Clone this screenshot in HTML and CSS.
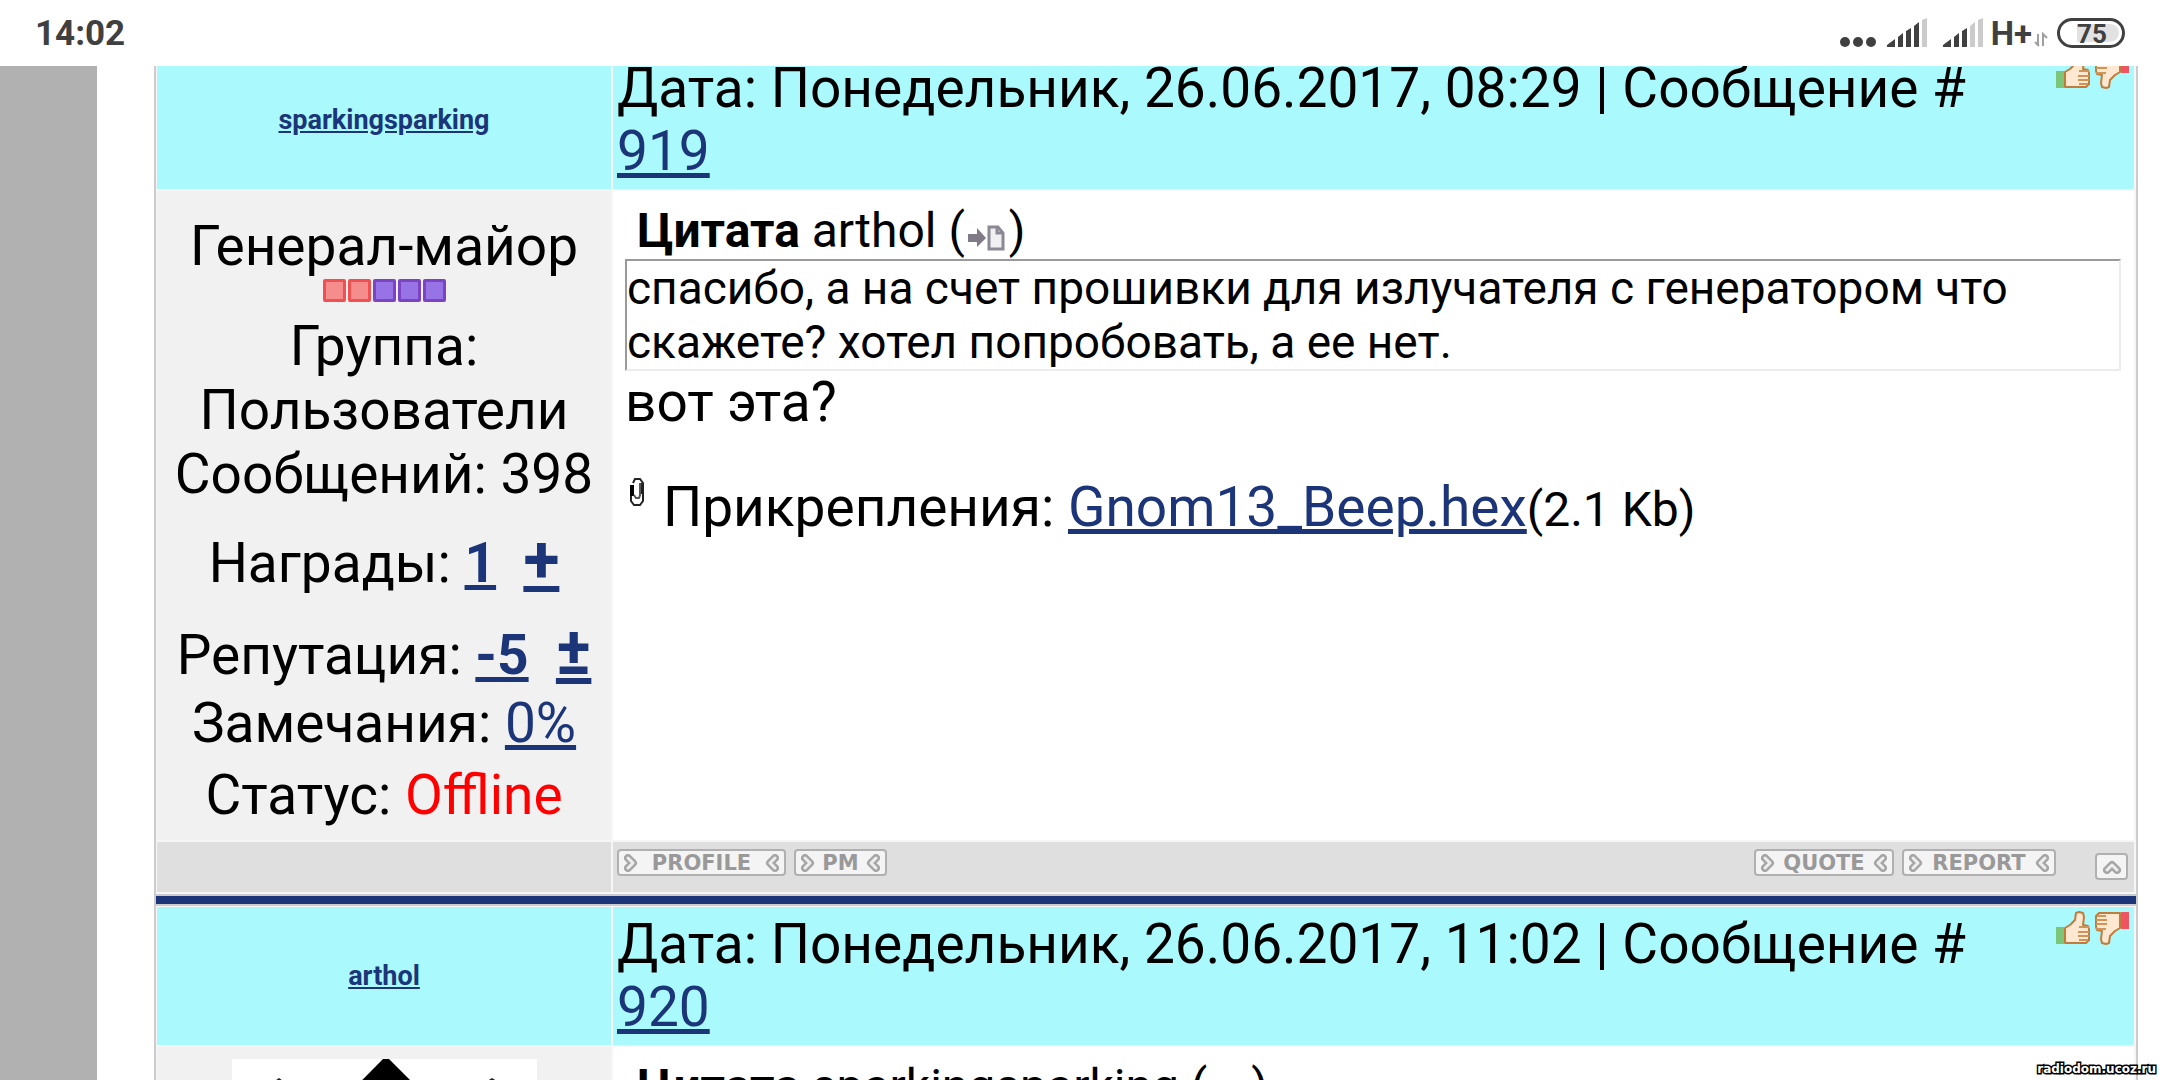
FILE: index.html
```html
<!DOCTYPE html>
<html lang="ru">
<head>
  <meta charset="UTF-8"/>
  <meta name="viewport" content="width=device-width, initial-scale=1.0"/>
  <title>Форум</title>
  <link rel="stylesheet" href="styles.css">
</head>
<body>
<!-- shared shapes -->
<svg class="defs" aria-hidden="true">
  <symbol id="chevron" viewBox="0 0 14 18">
    <path d="M4 4 L9 9 L4 14" fill="none" stroke="#a6a6a6" stroke-width="8" stroke-linecap="round" stroke-linejoin="round"/>
    <path d="M4 4 L9 9 L4 14" fill="none" stroke="#eeeeee" stroke-width="3" stroke-linecap="round" stroke-linejoin="round"/>
  </symbol>
  <symbol id="thumb" viewBox="0 0 34 34">
    <path d="M9 17 L14 14 L19 9 L20 2 L23 1 L27 2 L28 6 L27 14 L32 15 L33 18 V29 L30 32 H9 Z" fill="#ffe8d2" stroke="#bf7c3a" stroke-width="2" stroke-linejoin="round"/>
    <path d="M23 16 H33 M22 21 H33 M22 25 H33 M23 29 H32" stroke="#cf9558" stroke-width="2"/>
  </symbol>
  <symbol id="to-post" viewBox="0 0 38 26">
    <path d="M1 9 H10 V3 L19 13 L10 22 V17 H1 Z" fill="#7f7a86"/>
    <path d="M22 2 H31 L36 8 V24 H22 Z" fill="#f0f0f2" stroke="#8c8894" stroke-width="3"/>
    <path d="M30 2 V8 H36" fill="none" stroke="#8c8894" stroke-width="3"/>
  </symbol>
</svg>

<header class="status-bar">
  <span class="clock">14:02</span>
  <svg class="dots" width="36" height="30" viewBox="0 0 36 30">
    <g fill="#404040"><circle cx="5" cy="24" r="5"/><circle cx="18" cy="24" r="5"/><circle cx="31" cy="24" r="5"/></g>
  </svg>
  <svg class="signal" width="40" height="30" viewBox="0 0 40 30">
    <path d="M0 29 V27 L8 21 V29 Z M11 29 V19 L16 15 V29 Z M19 29 V13 L24 10 V29 Z M27 29 V8 L32 4 V29 Z" fill="#404040"/>
    <path d="M35 29 V2 L40 0 V29 Z" fill="#cbcbcb"/>
  </svg>
  <svg class="signal" width="40" height="30" viewBox="0 0 40 30">
    <path d="M0 29 V27 L8 21 V29 Z M11 29 V19 L16 15 V29 Z M19 29 V13 L24 10 V29 Z" fill="#404040"/>
    <path d="M27 29 V8 L32 4 V29 Z M35 29 V2 L40 0 V29 Z" fill="#cbcbcb"/>
  </svg>
  <span class="network">H+</span>
  <svg class="traffic" width="14" height="30" viewBox="0 0 14 30">
    <path d="M4 16 V28 M1 24 L5 28 M9 28 V16 L13 20" fill="none" stroke="#a0a0a0" stroke-width="2"/>
  </svg>
  <span class="battery"><span class="charge">75</span></span>
</header>

<div class="viewport">
  <aside class="gutter"></aside>
  <main class="forum">
    <!-- post 919 -->
    <article class="post">
      <div class="cell name"><a href="#">sparkingsparking</a></div>
      <div class="cell top">
        <div class="date">Дата: Понедельник, 26.06.2017, 08:29 | Сообщение # <a href="#">919</a></div>
        <div class="votes">
          <button aria-label="+"><svg width="34" height="34"><rect x="0" y="16" width="8" height="17" fill="#7cc67a"/><use href="#thumb"/></svg></button>
          <button aria-label="-"><svg width="34" height="34" viewBox="0 0 34 34"><g transform="rotate(180 17 17)"><rect x="0" y="16" width="8" height="17" fill="#ee5560"/><use href="#thumb"/></g></svg></button>
        </div>
      </div>

      <div class="cell user">
        <div class="line">Генерал-майор</div>
        <div class="rank"><i class="red"></i><i class="red"></i><i></i><i></i><i></i></div>
        <div class="line group">Группа: Пользователи</div>
        <div class="line">Сообщений: 398</div>
        <div class="line awards">Награды: <a href="#"><b>1</b></a>&nbsp; <a href="#" class="plus">+</a></div>
        <div class="line reputation">Репутация: <a href="#"><b>-5</b></a>&nbsp; <a href="#" class="plus">±</a></div>
        <div class="line warnings">Замечания: <a href="#">0%</a></div>
        <div class="line state">Статус: <span class="offline">Offline</span></div>
      </div>
      <div class="cell message">
        <div class="quote-title"><b>Цитата</b> arthol (<a href="#" aria-label="arthol"><svg class="to-post" width="38" height="26"><use href="#to-post"/></svg></a>)</div>
        <blockquote>спасибо, а на счет прошивки для излучателя с генератором что скажете? хотел попробовать, а ее нет.</blockquote>
        <p>вот эта?</p>
        <div class="attach">
          <svg class="clip" width="16" height="30" viewBox="0 0 16 30">
            <path d="M4 6 L6 2 H11 L14 6 V24 L11 28 H5 L2 24 V8" fill="#fff" stroke="#222" stroke-width="2"/>
            <path d="M3 8 V19" stroke="#000" stroke-width="4"/>
            <path d="M13 6 V17" stroke="#222" stroke-width="3"/>
            <path d="M5 18 L7 21 H10 L11 18 V6" fill="none" stroke="#555" stroke-width="2"/>
          </svg>
          <span>Прикрепления: <a href="#">Gnom13_Beep.hex</a><small>(2.1 Kb)</small></span>
        </div>
      </div>

      <div class="cell foot"></div>
      <div class="cell foot tools">
        <button class="tool profile"><svg width="14" height="18"><use href="#chevron"/></svg>PROFILE<svg class="flip" width="14" height="18"><use href="#chevron"/></svg></button>
        <button class="tool pm"><svg width="14" height="18"><use href="#chevron"/></svg>PM<svg class="flip" width="14" height="18"><use href="#chevron"/></svg></button>
        <button class="tool quote"><svg width="14" height="18"><use href="#chevron"/></svg>QUOTE<svg class="flip" width="14" height="18"><use href="#chevron"/></svg></button>
        <button class="tool report"><svg width="14" height="18"><use href="#chevron"/></svg>REPORT<svg class="flip" width="14" height="18"><use href="#chevron"/></svg></button>
        <button class="tool up" aria-label="Вверх"><svg class="turn" width="14" height="18"><use href="#chevron"/></svg></button>
      </div>
    </article>

    <div class="divider"></div>

    <!-- post 920 -->
    <article class="post">
      <div class="cell name"><a href="#">arthol</a></div>
      <div class="cell top">
        <div class="date">Дата: Понедельник, 26.06.2017, 11:02 | Сообщение # <a href="#">920</a></div>
        <div class="votes">
          <button aria-label="+"><svg width="34" height="34"><rect x="0" y="16" width="8" height="17" fill="#7cc67a"/><use href="#thumb"/></svg></button>
          <button aria-label="-"><svg width="34" height="34" viewBox="0 0 34 34"><g transform="rotate(180 17 17)"><rect x="0" y="16" width="8" height="17" fill="#ee5560"/><use href="#thumb"/></g></svg></button>
        </div>
      </div>
      <div class="cell user with-avatar">
        <svg class="avatar" width="305" height="305" viewBox="0 0 305 305">
          <rect width="305" height="305" fill="#fff"/>
          <path d="M151 0 H157 L305 148 L153 300 L3 150 Z" fill="#000"/>
          <path d="M40 24 L47 19 L54 24 Z M252 24 L260 19 L268 24 Z" fill="#222"/>
        </svg>
      </div>
      <div class="cell message">
        <div class="quote-title"><b>Цитата</b> sparkingsparking (<a href="#" aria-label="sparkingsparking"><svg class="to-post" width="38" height="26"><use href="#to-post"/></svg></a>)</div>
      </div>
    </article>
  </main>
</div>

<div class="watermark">radiodom.ucoz.ru</div>
</body>
</html>
```
FILE: styles.css
```css
:root {
  --link: #1b3578;
  --cyan: #a9f9fd;
  --panel: #f1f1f1;
  --foot: #dfdfdf;
  --line: #cccccc;
  --status: #404040;
}

* {
  box-sizing: border-box;
}

body {
  margin: 0;
  height: 100vh;
  overflow: hidden;
  display: flex;
  flex-direction: column;
  background: #fff;
  color: #000;
  font-family: Roboto, sans-serif;
  font-size: 55px;
  line-height: 63px;
}

a {
  color: var(--link);
  text-decoration: underline;
}

button {
  padding: 0;
  border: none;
  background: none;
  cursor: pointer;
}

svg {
  display: block;
}

.defs {
  position: absolute;
  width: 0;
  height: 0;
}

/* status bar */
.status-bar {
  display: flex;
  align-items: center;
  flex: none;
  height: 66px;
  padding: 0 35px;
  color: var(--status);
  font-weight: 700;
  line-height: 40px;
}

.clock {
  margin-right: auto;
  padding-top: 2px;
  font-size: 35px;
}

.dots {
  margin-right: 11px;
}

.signal {
  margin-right: 16px;
}

.network {
  margin-left: -8px;
  padding-top: 2px;
  font-size: 33px;
}

.traffic {
  margin: 0 9px 0 2px;
}

.battery {
  width: 68px;
  height: 30px;
  padding: 3px;
  border: 3px solid var(--status);
  border-radius: 15px;
  font-size: 26px;
  line-height: 20px;
}

.charge {
  display: block;
  height: 18px;
  margin-left: 14px;
  border-radius: 0 9px 9px 0;
  background: #e2e2e2;
}

/* page */
.viewport {
  flex: 1;
  display: flex;
  align-items: flex-start;
  min-height: 0;
  overflow: hidden;
}

.gutter {
  flex: none;
  align-self: stretch;
  width: 97px;
  background: #b1b1b1;
}

.forum {
  flex: 1;
  margin: -16px 22px 0 57px;
  border: 2px solid var(--line);
  border-top: none;
}

.post {
  display: grid;
  grid-template-columns: 454px 1fr;
  gap: 2px;
  padding: 1px 2px 2px 1px;
  background: #f6f6f6;
}

.cell {
  min-width: 0;
}

.name {
  display: flex;
  align-items: center;
  justify-content: center;
  background: var(--cyan);
  font-size: 27px;
  font-weight: 700;
  line-height: 32px;
}

.top {
  display: flex;
  justify-content: space-between;
  padding: 6px 5px 6px 4px;
  background: var(--cyan);
}

.date {
  flex: 1;
}

.votes {
  display: flex;
  gap: 5px;
  margin-top: -2px;
  height: 34px;
}

/* left column */
.user {
  padding: 23px 12px 13px;
  background: var(--panel);
  text-align: center;
}

.line {
  line-height: 64px;
}

.rank {
  display: flex;
  justify-content: center;
  gap: 2px;
  margin: 1px 0 12px;
}

.rank i {
  width: 23px;
  height: 23px;
  border: 3px solid #7a44c2;
  border-radius: 2px;
  background: #9873e6;
}

.rank .red {
  border-color: #f0504f;
  background: #f58d8c;
}

.awards {
  margin-top: 25px;
}

.reputation {
  margin-top: 28px;
}

.warnings {
  margin-top: 4px;
}

.state {
  margin-top: 8px;
}

.plus {
  font-size: 66px;
  font-weight: 700;
  line-height: 0;
}

.offline {
  color: #f00;
}

/* message */
.message {
  padding: 11px 13px 11px 12px;
  background: #fff;
}

.quote-title {
  padding-left: 12px;
  font-size: 48px;
  line-height: 57px;
}

.to-post {
  display: inline-block;
  margin: 0 4px 0 2px;
  vertical-align: -4px;
}

blockquote {
  margin: 0;
  border: 2px solid #ececec;
  border-top-color: #9a9a9a;
  border-left-color: #9a9a9a;
  font-size: 46px;
  line-height: 54px;
}

.message p {
  margin: 0;
}

.attach {
  display: flex;
  margin-top: 42px;
}

.clip {
  flex: none;
  margin: 1px 18px 0 4px;
}

.attach small {
  font-size: 48px;
}

/* buttons under a post */
.foot {
  height: 50px;
  background: var(--foot);
}

.tools {
  display: flex;
  align-items: flex-start;
  padding: 7px 6px 0 4px;
}

.tool {
  display: flex;
  align-items: center;
  justify-content: space-between;
  height: 27px;
  margin-right: 8px;
  padding: 0 5px;
  border: 2px solid #b0b0b0;
  border-radius: 4px;
  background: #f4f4f4;
  color: #999;
  font-family: "DejaVu Sans", sans-serif;
  font-size: 21px;
  font-weight: 700;
  line-height: 22px;
}

.profile {
  width: 169px;
}

.pm {
  width: 93px;
}

.quote {
  width: 140px;
  margin-left: auto;
}

.report {
  width: 154px;
}

.up {
  justify-content: center;
  width: 33px;
  margin: 4px 0 0 31px;
}

.flip {
  transform: rotate(180deg);
}

.turn {
  transform: rotate(-90deg);
}

.divider {
  height: 12px;
  border: solid var(--line);
  border-width: 2px 0;
  background: var(--link);
}

.with-avatar {
  padding-top: 12px;
}

.avatar {
  margin: 0 auto;
}

.watermark {
  position: absolute;
  right: 4px;
  bottom: 1px;
  color: #fff;
  font-family: "DejaVu Sans", sans-serif;
  font-size: 12px;
  font-weight: 700;
  line-height: 20px;
  -webkit-text-stroke: 3px #000;
  paint-order: stroke fill;
}
```
